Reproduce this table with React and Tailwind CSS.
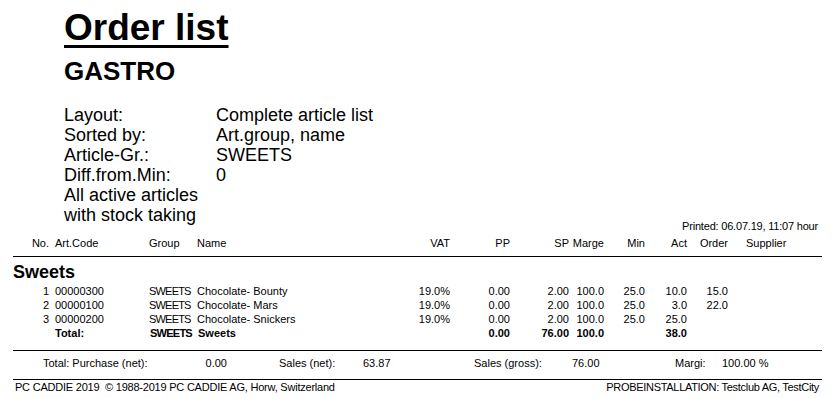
const cols =
  'grid grid-cols-[36px_100px_48px_203px_50px_60px_59px_35px_41px_42px_41px_1fr]';

const rows = [
  { no: '1', code: '00000300', group: 'SWEETS', name: 'Chocolate- Bounty', vat: '19.0%', pp: '0.00', sp: '2.00', marge: '100.0', min: '25.0', act: '10.0', order: '15.0' },
  { no: '2', code: '00000100', group: 'SWEETS', name: 'Chocolate- Mars', vat: '19.0%', pp: '0.00', sp: '2.00', marge: '100.0', min: '25.0', act: '3.0', order: '22.0' },
  { no: '3', code: '00000200', group: 'SWEETS', name: 'Chocolate- Snickers', vat: '19.0%', pp: '0.00', sp: '2.00', marge: '100.0', min: '25.0', act: '25.0', order: '' },
];

const info = [
  ['Layout:', 'Complete article list'],
  ['Sorted by:', 'Art.group, name'],
  ['Article-Gr.:', 'SWEETS'],
  ['Diff.from.Min:', '0'],
];

function Row({ r, bold }) {
  return (
    <div className={`${cols} h-[14px] leading-[14px] text-[11px] ${bold ? 'font-bold' : ''}`}>
      <span className="text-right">{r.no}</span>
      <span className="pl-[6px]">{r.code}</span>
      <span className={bold ? 'pl-px tracking-[-0.75px]' : 'tracking-[-0.8px]'}>{r.group}</span>
      <span className={bold ? 'pl-px' : ''}>{r.name}</span>
      <span className="text-right">{r.vat}</span>
      <span className="text-right">{r.pp}</span>
      <span className="text-right">{r.sp}</span>
      <span className="text-right">{r.marge}</span>
      <span className="text-right">{r.min}</span>
      <span className="text-right">{r.act}</span>
      <span className="text-right">{r.order}</span>
      <span className="pl-[18px]"></span>
    </div>
  );
}

export default function App() {
  return (
    <div className="w-[834px] h-[398px] bg-white text-black font-['Liberation_Sans',Arial,sans-serif] pl-[13px] pr-[12px] pt-[9px] overflow-hidden">
      <div className="flex items-end justify-between">
        <div className="pl-[51px]">
          <h1 className="text-[37px] leading-[37px] font-bold underline decoration-[3px] underline-offset-[5px]">
            Order list
          </h1>
          <h2 className="mt-[12px] text-[26px] leading-[26px] font-bold">GASTRO</h2>
          <div className="mt-[21px] text-[18px] leading-[20px]">
            {info.map(([k, v]) => (
              <div key={k} className="flex">
                <span className="w-[152px]">{k}</span>
                <span>{v}</span>
              </div>
            ))}
            <div>All active articles</div>
            <div>with stock taking</div>
          </div>
        </div>
        <span className="text-[11px] leading-[14px] tracking-[-0.2px] -mb-[8px] pr-[4px]">
          Printed: 06.07.19, 11:07 hour
        </span>
      </div>

      <div className={`${cols} mt-[11px] h-[14px] leading-[14px] text-[11px]`}>
        <span className="text-right">No.</span>
        <span className="pl-[6px]">Art.Code</span>
        <span>Group</span>
        <span>Name</span>
        <span className="text-right">VAT</span>
        <span className="text-right">PP</span>
        <span className="text-right">SP</span>
        <span className="text-right">Marge</span>
        <span className="text-right">Min</span>
        <span className="text-right">Act</span>
        <span className="text-right">Order</span>
        <span className="pl-[18px]">Supplier</span>
      </div>
      <div className="mt-[6px] h-px bg-black" />

      <div className="mt-[6px] text-[18px] leading-[18px] font-bold">Sweets</div>
      <div className="mt-[3px]">
        {rows.map((r) => (
          <Row key={r.no} r={r} />
        ))}
        <Row
          bold
          r={{ no: '', code: 'Total:', group: 'SWEETS', name: 'Sweets', vat: '', pp: '0.00', sp: '76.00', marge: '100.0', min: '', act: '38.0', order: '' }}
        />
      </div>

      <div className="mt-[10px] h-px bg-black" />
      <div className="mt-[5px] grid grid-cols-[30px_150px_34px_52px_84px_111px_98px_103px_47px_1fr] h-[14px] leading-[14px] text-[11px]">
        <span></span>
        <span>Total: Purchase (net):</span>
        <span className="text-right">0.00</span>
        <span></span>
        <span>Sales (net):</span>
        <span>63.87</span>
        <span>Sales (gross):</span>
        <span>76.00</span>
        <span>Margi:</span>
        <span>100.00 %</span>
      </div>
      <div className="mt-[9px] h-px bg-black" />
      <div className="flex justify-between h-[14px] leading-[14px] text-[11px]">
        <span className="pl-[2px] whitespace-pre tracking-[-0.22px]">
          PC CADDIE 2019  © 1988-2019 PC CADDIE AG, Horw, Switzerland
        </span>
        <span className="pr-[3px] tracking-[-0.3px]">PROBEINSTALLATION: Testclub AG, TestCity</span>
      </div>
    </div>
  );
}
